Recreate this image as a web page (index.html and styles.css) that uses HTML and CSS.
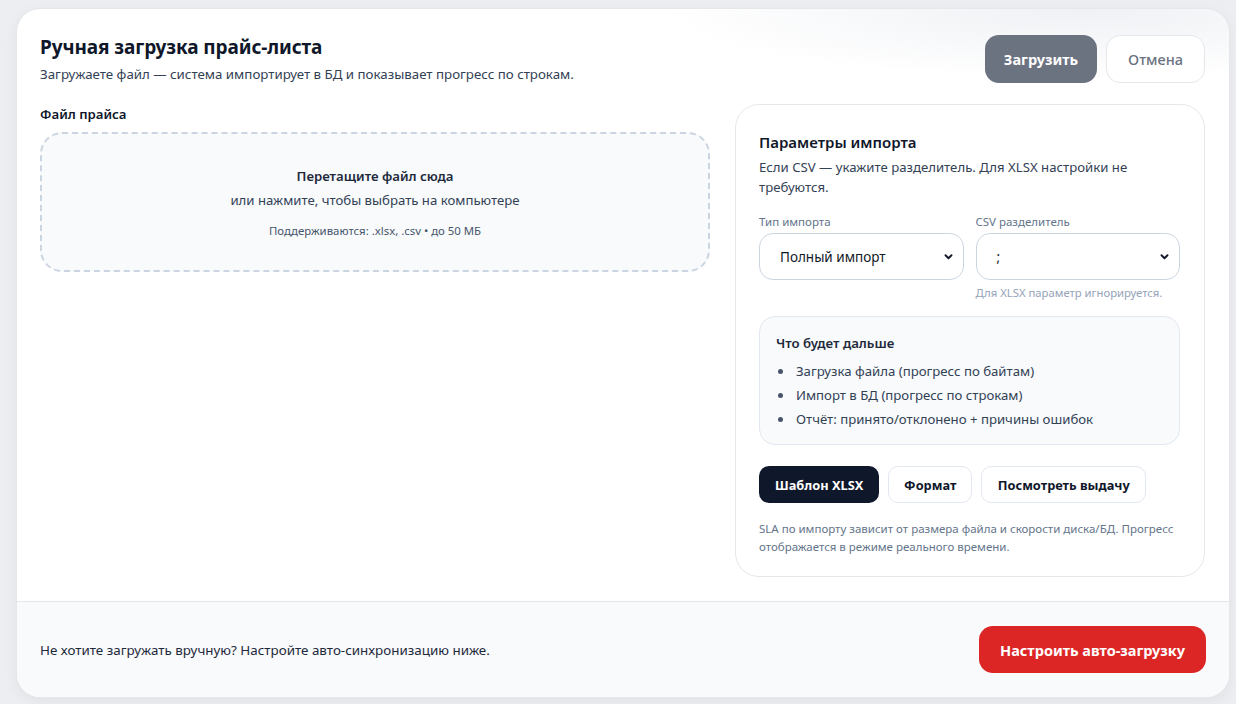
FILE: index.html
```html
<!DOCTYPE html>
<html lang="ru">
<head>
<meta charset="utf-8">
<title>Ручная загрузка прайс-листа</title>
<link rel="stylesheet" href="styles.css">
</head>
<body>
<div class="card">
  <div class="main">
    <div class="header">
      <div class="head-text">
        <h1 class="title">Ручная загрузка прайс-листа</h1>
        <p class="subtitle">Загружаете файл — система импортирует в БД и показывает прогресс по строкам.</p>
      </div>
      <div class="head-actions">
        <button class="btn btn-upload">Загрузить</button>
        <button class="btn btn-cancel">Отмена</button>
      </div>
    </div>
    <div class="columns">
      <div class="left">
        <div class="field-label">Файл прайса</div>
        <div class="dropzone">
          <div class="dz-title">Перетащите файл сюда</div>
          <div class="dz-sub">или нажмите, чтобы выбрать на компьютере</div>
          <div class="dz-hint">Поддерживаются: .xlsx, .csv • до 50 МБ</div>
        </div>
      </div>
      <div class="panel">
        <h2 class="panel-title">Параметры импорта</h2>
        <p class="panel-desc">Если CSV — укажите разделитель. Для XLSX настройки не требуются.</p>
        <div class="selects">
          <div class="sel-field">
            <div class="sel-label">Тип импорта</div>
            <div class="select"><span>Полный импорт</span><svg class="chev" viewBox="0 0 10 7" width="9" height="6"><path d="M1.5 1.5 L5 5 L8.5 1.5" fill="none" stroke="#111827" stroke-width="2.2" stroke-linecap="round" stroke-linejoin="round"/></svg></div>
          </div>
          <div class="sel-field">
            <div class="sel-label">CSV разделитель</div>
            <div class="select"><span>;</span><svg class="chev" viewBox="0 0 10 7" width="9" height="6"><path d="M1.5 1.5 L5 5 L8.5 1.5" fill="none" stroke="#111827" stroke-width="2.2" stroke-linecap="round" stroke-linejoin="round"/></svg></div>
            <div class="sel-help">Для XLSX параметр игнорируется.</div>
          </div>
        </div>
        <div class="info">
          <div class="info-title">Что будет дальше</div>
          <ul class="info-list">
            <li>Загрузка файла (прогресс по байтам)</li>
            <li>Импорт в БД (прогресс по строкам)</li>
            <li>Отчёт: принято/отклонено + причины ошибок</li>
          </ul>
        </div>
        <div class="panel-actions">
          <button class="btn-sm btn-dark">Шаблон XLSX</button>
          <button class="btn-sm btn-light btn-format">Формат</button>
          <button class="btn-sm btn-light btn-view">Посмотреть выдачу</button>
        </div>
        <p class="sla">SLA по импорту зависит от размера файла и скорости диска/БД. Прогресс отображается в режиме реального времени.</p>
      </div>
    </div>
  </div>
  <div class="footer">
    <span class="footer-text">Не хотите загружать вручную? Настройте авто-синхронизацию ниже.</span>
    <button class="btn btn-red">Настроить авто-загрузку</button>
  </div>
</div>
</body>
</html>
```

FILE: styles.css
```css
* { box-sizing: border-box; }
html, body { margin: 0; padding: 0; }
body {
  background: #eceef1;
  font-family: "Noto Sans", "Open Sans", sans-serif;
  color: #0f172a;
  padding: 8px 6px 6px 16px;
  height: 704px;
}
.card {
  background:
    radial-gradient(ellipse 420px 70px at 88% 0, rgba(232, 235, 240, 0.7), rgba(255, 255, 255, 0)),
    #ffffff;
  border: 1px solid #e5e7eb;
  border-radius: 24px;
  height: 690px;
  display: flex;
  flex-direction: column;
  overflow: hidden;
  box-shadow: 0 4px 14px rgba(15, 23, 42, 0.05);
}
.main {
  flex: 1;
  padding: 26px 24px 0 23px;
}
.header {
  display: flex;
  justify-content: space-between;
  align-items: flex-start;
}
.title {
  margin: 0;
  font-size: 19px;
  font-weight: 700;
  line-height: 24px;
  color: #0f172a;
  letter-spacing: -0.1px;
}
.subtitle {
  margin: 6px 0 0;
  font-size: 13.3px;
  line-height: 18px;
  color: #334155;
}
.head-actions {
  display: flex;
  gap: 9px;
}
.btn {
  font-family: inherit;
  border-radius: 14px;
  height: 48px;
  font-size: 14.5px;
  cursor: pointer;
}
.btn-upload {
  background: #6b7280;
  color: #ffffff;
  border: none;
  font-weight: 700;
  width: 112px;
}
.btn-cancel {
  background: #ffffff;
  color: #6b7280;
  border: 1px solid #e5e7eb;
  font-weight: 500;
  width: 99px;
}
.columns {
  display: flex;
  gap: 25px;
  margin-top: 21px;
  align-items: flex-start;
}
.left {
  flex: 0 0 670px;
  padding-top: 1px;
}
.field-label {
  font-size: 13.2px;
  font-weight: 600;
  color: #0f172a;
  line-height: 18px;
}
.dropzone {
  margin-top: 9px;
  height: 140px;
  padding-top: 2px;
  border: 2px dashed #cbd5e1;
  border-radius: 22px;
  background: #f8fafc;
  display: flex;
  flex-direction: column;
  align-items: center;
  justify-content: center;
  text-align: center;
}
.dz-title {
  font-size: 13.2px;
  font-weight: 600;
  color: #1e293b;
  line-height: 18px;
}
.dz-sub {
  margin-top: 6px;
  font-size: 13.2px;
  color: #334155;
  line-height: 18px;
}
.dz-hint {
  margin-top: 14px;
  font-size: 11.4px;
  color: #475569;
  line-height: 16px;
}
.panel {
  flex: 0 0 470px;
  border: 1px solid #e5e7eb;
  border-radius: 24px;
  padding: 26px 24px 20px 23px;
  background: #ffffff;
}
.panel-title {
  margin: 0;
  font-size: 15px;
  font-weight: 600;
  line-height: 22px;
  color: #0f172a;
}
.panel-desc {
  margin: 4px 0 0;
  font-size: 13.2px;
  line-height: 20px;
  color: #334155;
}
.selects {
  display: flex;
  gap: 12px;
  margin-top: 17px;
}
.sel-field { flex: 1; }
.sel-label {
  font-size: 11.5px;
  color: #64748b;
  line-height: 16px;
}
.select {
  margin-top: 3px;
  height: 47px;
  border: 1px solid #cbd5e1;
  border-radius: 14px;
  display: flex;
  align-items: center;
  justify-content: space-between;
  padding: 0 10px 0 20px;
  font-size: 13.5px;
  color: #111827;
  background: #ffffff;
}
.chev { flex: none; }
.sel-help {
  margin-top: 5px;
  font-size: 11.3px;
  color: #94a3b8;
  line-height: 16px;
}
.info {
  margin-top: 15px;
  background: #f8fafc;
  border: 1px solid #e2e8f0;
  border-radius: 16px;
  padding: 16px 16px 13px;
}
.info-title {
  font-size: 13.2px;
  font-weight: 600;
  color: #1e293b;
  line-height: 20px;
}
.info-list {
  margin: 6px 0 0;
  padding: 0 0 0 2px;
  list-style: none;
  font-size: 13.2px;
  color: #334155;
  line-height: 24px;
}
.info-list li {
  display: flex;
  align-items: center;
}
.info-list li::before {
  content: "";
  flex: none;
  width: 5px;
  height: 5px;
  border-radius: 50%;
  background: #475569;
  margin-right: 13px;
}
.panel-actions {
  display: flex;
  gap: 9px;
  margin-top: 21px;
}
.btn-sm {
  font-family: inherit;
  height: 37px;
  border-radius: 10px;
  font-size: 12.8px;
  font-weight: 700;
  padding: 0 16px;
  cursor: pointer;
}
.btn-format { width: 84px; padding: 0; }
.btn-view { width: 165px; padding: 0; }
.btn-dark {
  background: #0f172a;
  color: #ffffff;
  border: none;
}
.btn-light {
  background: #ffffff;
  color: #0f172a;
  border: 1px solid #e2e8f0;
}
.sla {
  margin: 17px 0 0;
  font-size: 11.5px;
  line-height: 18px;
  color: #64748b;
}
.footer {
  height: 96px;
  flex: none;
  background: #f8fafc;
  border-top: 1px solid #e5e7eb;
  display: flex;
  align-items: center;
  justify-content: space-between;
  padding: 0 23px 0 23px;
}
.footer-text {
  font-size: 13.4px;
  color: #1e293b;
}
.btn-red {
  background: #dc2626;
  color: #ffffff;
  border: none;
  font-weight: 700;
  font-size: 14.5px;
  width: 227px;
  height: 47px;
}
```
